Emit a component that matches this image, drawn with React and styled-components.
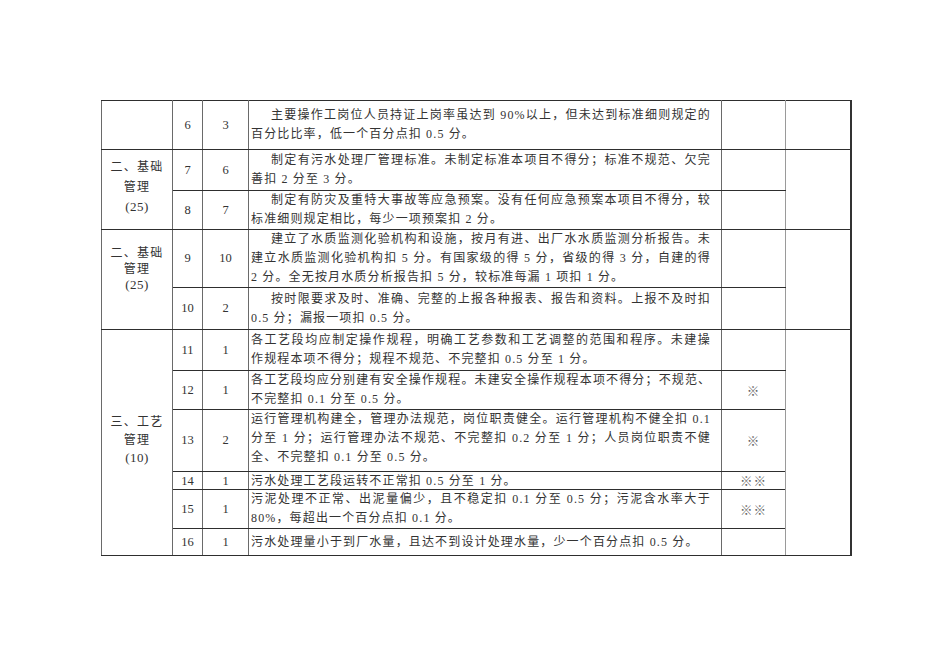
import React from "react";
import styled, { createGlobalStyle } from "styled-components";

const Global = createGlobalStyle`
  html, body { margin: 0; padding: 0; background: #fff; }
  body { font-family: "Liberation Serif", "Noto Sans CJK SC", serif; color: #333; }
`;

const Page = styled.div`
  padding: 100px 0 0 101px;
  width: 950px;
  height: 672px;
  box-sizing: border-box;
`;

const Table = styled.table`
  border-collapse: collapse;
  table-layout: fixed;
  width: 749px;
  border-top: 1px solid #9a9a9a;
  border-left: 1px solid #9a9a9a;
  border-bottom: 1px solid #8a8a8a;
  border-right: 2px solid #333;
  font-size: 12px;
  line-height: 19px;
`;

const Col = styled.col`
  width: ${(p) => p.$w}px;
`;

const Row = styled.tr`
  height: ${(p) => p.$h}px;
  line-height: ${(p) => p.$lh || 19}px;
`;

const Cell = styled.td`
  padding: 0;
  vertical-align: middle;
  border-top: 1px solid #2e2e2e;
  border-bottom: 1px solid #2e2e2e;
  border-left: 1px solid #6a6a6a;
  border-right: 1px solid #6a6a6a;
  text-align: center;
  color: #333;
`;

const GroupCell = styled(Cell)`
  line-height: ${(p) => p.$lh || 19}px;
  padding-bottom: ${(p) => p.$pb || 0}px;
`;

const GroupLine = styled.div`
  letter-spacing: ${(p) => (p.$tight ? 0.5 : 1.2)}px;
  font-size: ${(p) => (p.$tight ? 13 : 12)}px;
`;

const NumCell = styled(Cell)`
  font-size: 12.5px;
`;

const TextCell = styled(Cell)`
  text-align: left;
  vertical-align: ${(p) => (p.$top ? "top" : "middle")};
  padding: 0 10px 0 2px;
  letter-spacing: 1.15px;
`;

const MarkCell = styled(Cell)`
  border-left-color: #8a8a8a;
  border-right-color: #9a9a9a;
  font-family: "Noto Sans CJK SC", sans-serif;
  font-size: 12.5px;
  letter-spacing: 1px;
  color: #666;
`;

const LastCell = styled(Cell)`
  border-left: 1px solid #9a9a9a;
`;

const Line = styled.div`
  text-align: left;
  text-align-last: ${(p) => (p.$justify ? "justify" : "left")};
  text-indent: ${(p) => (p.$indent ? "20px" : "0")};
  white-space: nowrap;
`;

const G2 = ["二、基础", "管理", "(25)"];
const G3 = ["三、工艺", "管理", "(10)"];
const COLS = [71, 30, 46, 473, 64, 65];

const rows = [
  {
    h: 49,
    group: { lines: [], span: 1 },
    no: 6,
    score: 3,
    indent: true,
    lines: [
      "主要操作工岗位人员持证上岗率虽达到 90%以上，但未达到标准细则规定的",
      "百分比比率，低一个百分点扣 0.5 分。",
    ],
    last: 1,
  },
  {
    h: 41,
    group: { lines: G2, span: 2, pb: 6, lh: 20 },
    no: 7,
    score: 6,
    indent: true,
    lines: [
      "制定有污水处理厂管理标准。未制定标准本项目不得分；标准不规范、欠完",
      "善扣 2 分至 3 分。",
    ],
    last: 2,
  },
  {
    h: 39,
    no: 8,
    score: 7,
    indent: true,
    lines: [
      "制定有防灾及重特大事故等应急预案。没有任何应急预案本项目不得分，较",
      "标准细则规定相比，每少一项预案扣 2 分。",
    ],
  },
  {
    h: 57,
    group: { lines: G2, span: 2, pb: 22, lh: 16 },
    no: 9,
    score: 10,
    indent: true,
    lines: [
      "建立了水质监测化验机构和设施，按月有进、出厂水水质监测分析报告。未",
      "建立水质监测化验机构扣 5 分。有国家级的得 5 分，省级的得 3 分，自建的得",
      "2 分。全无按月水质分析报告扣 5 分，较标准每漏 1 项扣 1 分。",
    ],
    last: 2,
  },
  {
    h: 42,
    no: 10,
    score: 2,
    indent: true,
    lines: [
      "按时限要求及时、准确、完整的上报各种报表、报告和资料。上报不及时扣",
      "0.5 分；漏报一项扣 0.5 分。",
    ],
  },
  {
    h: 41,
    group: { lines: G3, span: 6, pb: 6, lh: 18 },
    no: 11,
    score: 1,
    lines: [
      "各工艺段均应制定操作规程，明确工艺参数和工艺调整的范围和程序。未建操",
      "作规程本项不得分；规程不规范、不完整扣 0.5 分至 1 分。",
    ],
    last: 6,
  },
  {
    h: 38,
    no: 12,
    score: 1,
    lines: [
      "各工艺段均应分别建有安全操作规程。未建安全操作规程本项不得分；不规范、",
      "不完整扣 0.1 分至 0.5 分。",
    ],
    mark: "※",
  },
  {
    h: 62,
    no: 13,
    score: 2,
    top: true,
    lines: [
      "运行管理机构建全，管理办法规范，岗位职责健全。运行管理机构不健全扣 0.1",
      "分至 1 分；运行管理办法不规范、不完整扣 0.2 分至 1 分；人员岗位职责不健",
      "全、不完整扣 0.1 分至 0.5 分。",
    ],
    mark: "※",
  },
  {
    h: 18,
    no: 14,
    score: 1,
    lh: 16,
    lines: ["污水处理工艺段运转不正常扣 0.5 分至 1 分。"],
    mark: "※※",
  },
  {
    h: 39,
    no: 15,
    score: 1,
    lines: [
      "污泥处理不正常、出泥量偏少，且不稳定扣 0.1 分至 0.5 分；污泥含水率大于",
      "80%，每超出一个百分点扣 0.1 分。",
    ],
    mark: "※※",
  },
  {
    h: 27,
    no: 16,
    score: 1,
    lines: ["污水处理量小于到厂水量，且达不到设计处理水量，少一个百分点扣 0.5 分。"],
  },
];

export default function App() {
  return (
    <Page>
      <Global />
      <Table>
        <colgroup>
          {COLS.map((w, i) => (
            <Col key={i} $w={w} />
          ))}
        </colgroup>
        <tbody>
          {rows.map((r) => (
            <Row key={r.no} $h={r.h} $lh={r.lh}>
              {r.group && (
                <GroupCell rowSpan={r.group.span} $pb={r.group.pb} $lh={r.group.lh}>
                  {r.group.lines.map((l, i) => (
                    <GroupLine key={l} $tight={i === 2}>
                      {l}
                    </GroupLine>
                  ))}
                </GroupCell>
              )}
              <NumCell>{r.no}</NumCell>
              <NumCell>{r.score}</NumCell>
              <TextCell $top={r.top}>
                {r.lines.map((l, i) => (
                  <Line
                    key={i}
                    $indent={r.indent && i === 0}
                    $justify={i < r.lines.length - 1}
                  >
                    {l}
                  </Line>
                ))}
              </TextCell>
              <MarkCell>{r.mark || ""}</MarkCell>
              {r.last && <LastCell rowSpan={r.last} />}
            </Row>
          ))}
        </tbody>
      </Table>
    </Page>
  );
}
